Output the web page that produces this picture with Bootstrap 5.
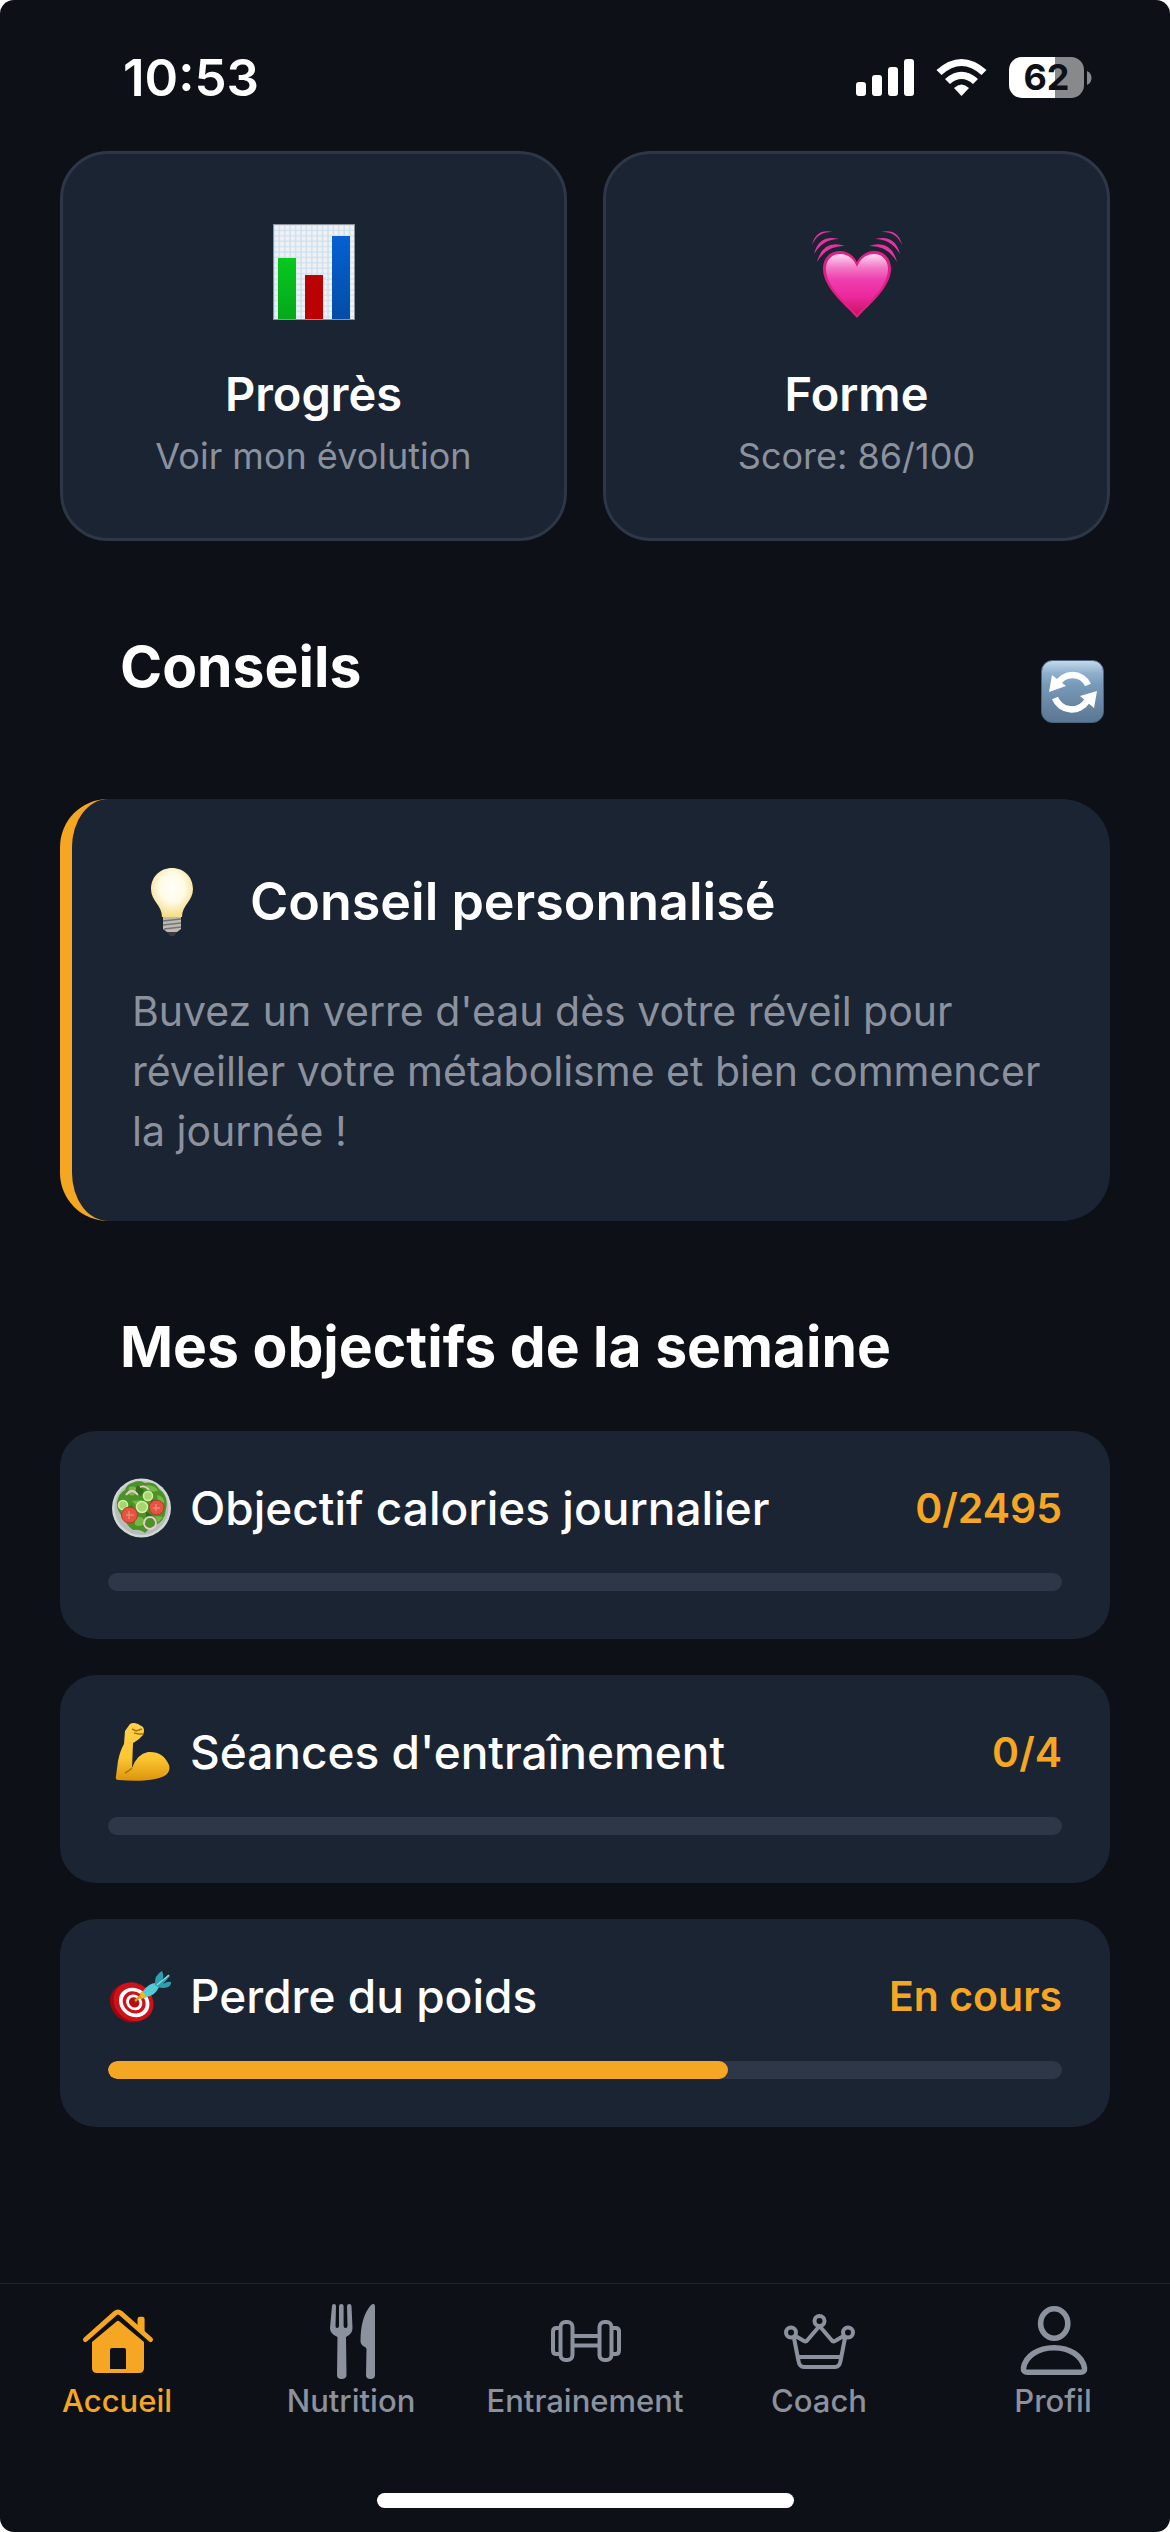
<!DOCTYPE html>
<html lang="fr">
<head>
<meta charset="utf-8">
<meta name="viewport" content="width=device-width, initial-scale=1">
<title>Accueil</title>
<link rel="stylesheet" href="https://cdn.jsdelivr.net/npm/bootstrap@5.3.0/dist/css/bootstrap.min.css">
<style>
  :root { --ink: #0d1017; --panel: #1b2432; --line: #2d3748; --accent: #f5a623; --muted: #8b929e; }
  body { background: #fff; color: #fff; font-family: Inter, "Noto Sans", sans-serif; }
  svg { display: block; flex: none; }
  .app { background: var(--ink); border-radius: 14px; }
  .statusbar { height: 151px; padding: 4px 78px 0 123px; }
  .status-icons { gap: 22px; }
  .clock { font-size: 51px; line-height: 60px; font-weight: 600; }
  .battery { width: 75px; height: 41px; border-radius: 13px; color: var(--ink); font-size: 36px; line-height: 41px; font-weight: 700;
    background: linear-gradient(90deg, #fff 62%, #88898d 62%); }
  .page { padding: 0 60px; }
  .tile { background: var(--panel); border: 3px solid var(--line); border-radius: 48px; padding: 60px 24px; color: #fff; }
  .tile-art { height: 116px; margin-bottom: 36px; }
  .tile-title { font-size: 47px; line-height: 56px; font-weight: 600; margin-bottom: 12px; }
  .tile-sub { font-size: 36px; line-height: 44px; color: var(--muted); }
  .tiles { gap: 36px; }
  .section-head { margin-top: 90px; padding: 0 6px 0 60px; }
  .section-head h2 { font-size: 57px; line-height: 72px; font-weight: 700; margin-bottom: 48px; }
  .tip { background: var(--panel); border-left: 12px solid var(--accent); border-radius: 48px; padding: 60px; margin-top: 48px; }
  .tip-head { height: 86px; gap: 38px; margin-bottom: 36px; }
  .tip-head h3 { font-size: 52px; line-height: 64px; font-weight: 600; }
  .tip p { font-size: 41px; line-height: 60px; color: var(--muted); }
  .goals { gap: 36px; }
  .goal { background: var(--panel); border-radius: 36px; padding: 48px; }
  .goal-head { height: 58px; margin-bottom: 36px; }
  .goal-name { gap: 16px; font-size: 46px; line-height: 58px; font-weight: 500; }
  .goal-value { color: var(--accent); font-size: 41px; line-height: 58px; font-weight: 600; }
  .goal .progress { --bs-progress-height: 18px; --bs-progress-bg: var(--line); --bs-progress-border-radius: 9px; --bs-progress-bar-bg: var(--accent); }
  .goal .progress-bar { border-radius: 9px; }
  .tabbar { border-top: 1px solid #20252e; padding-top: 15px; }
  .tab { flex: 1 1 0; color: var(--muted); font-size: 31px; line-height: 36px; font-weight: 500; }
  .tab.active { color: var(--accent); }
  .home-bar { width: 417px; height: 15px; border-radius: 8px; background: #fff; margin: 74px auto 24px; }
</style>
<script src="https://cdn.jsdelivr.net/npm/bootstrap@5.3.0/dist/js/bootstrap.bundle.min.js"></script>
</head>
<body>
<div class="app d-flex flex-column min-vh-100">
  <header class="statusbar d-flex align-items-center justify-content-between">
    <div class="clock">10:53</div>
    <div class="status-icons d-flex align-items-center">
      <svg width="58" height="38" viewBox="0 0 58 38" fill="#fff" role="img" aria-label="Réseau"><rect y="23" width="10" height="14" rx="3"/><rect x="16" y="16" width="10" height="21" rx="3"/><rect x="32" y="8" width="10" height="29" rx="3"/><rect x="48" width="10" height="37" rx="3"/></svg>
      <svg width="51" height="38" viewBox="0 0 50 38" fill="#fff" role="img" aria-label="Wi-Fi"><path d="M0 11Q25-11 50 11L45 16Q25-2 5 16Z"/><path d="M8.500 20Q25 5.500 41.500 20L36.500 25Q25 15 13.500 25Z"/><path d="M17.500 29Q25 22 32.500 29L25 37Z"/></svg>
      <div class="d-flex align-items-center">
        <div class="battery text-center">62</div>
        <svg width="8" height="14" viewBox="0 0 8 14" fill="#88898d"><path d="M3 0Q7.500 2 7.500 7Q7.500 12 3 14Z"/></svg>
      </div>
    </div>
  </header>

  <main class="page flex-grow-1">
    <div class="tiles d-flex">
      <a href="#progres" class="tile flex-fill w-50 text-center text-decoration-none">
        <div class="tile-art d-flex align-items-center justify-content-center">
          <svg width="82" height="96" viewBox="0 0 82 96">
            <defs>
              <pattern id="grid" width="5.400" height="5.400" patternUnits="userSpaceOnUse"><rect width="5.400" height="5.400" fill="#f3f1f0"/><path d="M0 1H5.400M1 0V5.400" stroke="#c6e0f4" stroke-width="1.300"/></pattern>
              <linearGradient id="gg" x2="0" y2="1"><stop stop-color="#06c91e"/><stop offset="1" stop-color="#05a81a"/></linearGradient>
              <linearGradient id="gb" x2="0" y2="1"><stop stop-color="#0560d2"/><stop offset="1" stop-color="#044da6"/></linearGradient>
            </defs>
            <rect width="82" height="96" fill="url(#grid)"/><rect x=".5" y=".5" width="81" height="95" fill="none" stroke="#8d949c"/>
            <rect x="5" y="34" width="18" height="61" fill="url(#gg)"/><rect x="32" y="51" width="18" height="44" fill="#bb0202"/><rect x="59" y="12" width="18" height="83" fill="url(#gb)"/>
          </svg>
        </div>
        <div class="tile-title">Progrès</div>
        <div class="tile-sub">Voir mon évolution</div>
      </a>
      <a href="#forme" class="tile flex-fill w-50 text-center text-decoration-none">
        <div class="tile-art d-flex align-items-center justify-content-center">
          <svg width="90" height="92" viewBox="0 -5 90 92">
            <defs>
              <linearGradient id="hg" x2="0" y2="1"><stop stop-color="#ffd9f4"/><stop offset=".22" stop-color="#f279c6"/><stop offset=".42" stop-color="#ee3fae"/><stop offset=".7" stop-color="#ec289d"/><stop offset="1" stop-color="#c9145f"/></linearGradient>
            </defs>
            <path d="M45 87C38 78 11 58 11 38C11 27 18 20 28 20C36 20 42 25 45 31C48 25 54 20 62 20C72 20 79 27 79 38C79 58 52 78 45 87Z" fill="#df1f85"/>
            <path d="M45 84C38 75 14 57 14 38C14 29 20 23 28 23C36 23 42 28 45 36C48 28 54 23 62 23C70 23 76 29 76 38C76 57 52 75 45 84Z" fill="url(#hg)"/>
            <g id="waves" fill="#ee2fa3"><path d="M0 14Q4-3 21 1Q6 0 0 14Z"/><path d="M2 23Q7 3 27 8Q11 8 2 23Z"/><path d="M5 31Q11 8 33 15Q15 14 5 31Z"/></g>
            <use href="#waves" transform="translate(90 0) scale(-1 1)"/>
          </svg>
        </div>
        <div class="tile-title">Forme</div>
        <div class="tile-sub">Score: 86/100</div>
      </a>
    </div>

    <div class="section-head d-flex align-items-center justify-content-between">
      <h2>Conseils</h2>
      <button type="button" class="btn p-0 border-0" aria-label="Actualiser">
        <svg width="63" height="63" viewBox="0 0 63 63">
          <defs><linearGradient id="rg" x2="0" y2="1"><stop stop-color="#c7dcec"/><stop offset=".2" stop-color="#8fb0cd"/><stop offset=".4" stop-color="#7799b9"/><stop offset="1" stop-color="#5a7691"/></linearGradient></defs>
          <rect x=".5" y=".5" width="62" height="62" rx="11" fill="url(#rg)" stroke="#49647c"/>
          <path d="M16 25A17 17 0 0 1 47 25" fill="none" stroke="#fff" stroke-width="6.500"/><path d="M11 15L8 32L25 26Z" fill="#fff"/>
          <path d="M14 38A18 18 0 0 0 46 41" fill="none" stroke="#fff" stroke-width="6.500"/><path d="M56 31L39 36L53 48Z" fill="#fff"/>
        </svg>
      </button>
    </div>

    <section class="tip">
      <div class="tip-head d-flex align-items-center">
        <svg width="80" height="70" viewBox="0 0 80 70">
          <defs><radialGradient id="bg" cx=".5" cy=".4" r=".6"><stop stop-color="#fffffa"/><stop offset=".5" stop-color="#fffbe6"/><stop offset="1" stop-color="#f5dc86"/></radialGradient></defs>
          <path d="M40 1C28 1 19 10 19 22C19 34 30 38 30 50H50C50 38 61 34 61 22C61 10 52 1 40 1Z" fill="url(#bg)"/>
          <path d="M31 50H49V62L45 65H35L31 62Z" fill="#bdb9b3"/><path d="M31 54L49 52M31 58L49 56M32 62L49 60" stroke="#77736e" stroke-width="1.500"/><path d="M35 65H45L42 69H38Z" fill="#3c3b3b"/>
        </svg>
        <h3 class="mb-0">Conseil personnalisé</h3>
      </div>
      <p class="mb-0">Buvez un verre d'eau dès votre réveil pour réveiller votre métabolisme et bien commencer la journée !</p>
    </section>

    <div class="section-head"><h2>Mes objectifs de la semaine</h2></div>

    <div class="goals d-flex flex-column">
      <section class="goal">
        <div class="goal-head d-flex align-items-center justify-content-between">
          <div class="goal-name d-flex align-items-center">
            <svg width="66" height="60" viewBox="0 0 66 60">
              <circle cx="33.500" cy="30" r="29.500" fill="#d3d6d6"/><circle cx="33.500" cy="30" r="27" fill="#b7bdb8"/>
              <path d="M24 5Q31 1 37 5Q47 3 51 11Q61 18 58 31Q57 44 46 48Q39 52 37 55Q32 51 25 52Q18 47 16 40Q8 33 9 24Q11 15 17 12Q19 6 24 5Z" fill="#4c9327"/>
              <path d="M21 9Q28 7 31 13Q25 20 20 16ZM38 7Q48 7 50 13L42 14ZM49 17Q57 19 56 25L50 24ZM13 32Q20 32 20 36L14 37ZM27 39Q35 38 38 44Q34 50 27 47ZM47 38L55 39L50 45ZM24 23L34 22L30 29Z" fill="#74b944"/>
              <path d="M29 7L36 12L33 18L27 15ZM42 21L48 23L45 28ZM23 26L28 36L22 34ZM38 33L45 38L38 41Z" fill="#2f6f17"/>
              <g fill="#a6d672" stroke="#d3f0a4" stroke-width="1.500"><circle cx="15" cy="27" r="4.500"/><circle cx="34" cy="29" r="5.500"/><circle cx="40" cy="18" r="4.500"/></g>
              <g fill="#e35442" stroke="#bd3426"><circle cx="21.500" cy="37" r="8"/><circle cx="48.500" cy="29.500" r="7.500"/></g>
              <path d="M21 33V41M18 37H26M48 26V33M45 30H52" stroke="#f0876c" stroke-width="1.500"/>
              <g fill="none" stroke="#ecc9d2" stroke-width="1.800"><path d="M18 17Q24 9 30 17"/><path d="M32 9Q37 7 41 12"/><circle cx="42" cy="45" r="6"/></g>
            </svg>
            <span>Objectif calories journalier</span>
          </div>
          <div class="goal-value">0/2495</div>
        </div>
        <div class="progress" role="progressbar" aria-label="Calories" aria-valuenow="0" aria-valuemin="0" aria-valuemax="2495"><div class="progress-bar" style="width:0%"></div></div>
      </section>

      <section class="goal">
        <div class="goal-head d-flex align-items-center justify-content-between">
          <div class="goal-name d-flex align-items-center">
            <svg width="66" height="60" viewBox="0 0 66 60">
              <defs><linearGradient id="ag" x2="0" y2="1"><stop stop-color="#ffd24a"/><stop offset=".6" stop-color="#fdc633"/><stop offset="1" stop-color="#dc940c"/></linearGradient></defs>
              <path d="M17 9L22 2Q25 0 30 2L35 5Q37 8 35 13L31 17Q27 20 25 21L24 46Q29 32 40 30Q55 29 61 43Q64 54 47 57Q34 60 10 58Q7 58 8 54L10 39Q12 29 16 22Z" fill="url(#ag)"/>
              <path d="M24 46Q21 49 17 51M24 7L28 9L34 7M26 11L31 12L35 12" fill="none" stroke="#b06f08" stroke-width="1.400"/>
            </svg>
            <span>Séances d'entraînement</span>
          </div>
          <div class="goal-value">0/4</div>
        </div>
        <div class="progress" role="progressbar" aria-label="Séances" aria-valuenow="0" aria-valuemin="0" aria-valuemax="4"><div class="progress-bar" style="width:0%"></div></div>
      </section>

      <section class="goal">
        <div class="goal-head d-flex align-items-center justify-content-between">
          <div class="goal-name d-flex align-items-center">
            <svg width="66" height="60" viewBox="0 0 66 60">
              <g transform="rotate(38 24 36)"><ellipse cx="23" cy="38" rx="21" ry="18.500" fill="#96090e"/><ellipse cx="25" cy="35" rx="21" ry="18.500" fill="#cf1219"/><ellipse cx="26" cy="35" rx="16" ry="14" fill="#fff"/><ellipse cx="26" cy="35" rx="12" ry="10.500" fill="#cf1219"/><ellipse cx="26" cy="35" rx="8.500" ry="7.500" fill="#fff"/><ellipse cx="26" cy="35" rx="5.500" ry="4.800" fill="#b50f16"/></g>
              <path d="M27 35L36 27" stroke="#d59c15" stroke-width="2.500"/><path d="M32 27L35 25L40 31L33 33Z" fill="#e9b91f"/>
              <path d="M35 25Q42 16 49 17L51 21Q47 30 38 31Z" fill="#55cbd8"/><path d="M47 19Q46 9 54 5Q57 11 53 17L60 9L62 10L55 18Q60 15 63 16Q64 21 56 22Q52 22 50 21Z" fill="#2e9fae"/><path d="M49 19L61 9" stroke="#81dce2" stroke-width="1.500"/>
            </svg>
            <span>Perdre du poids</span>
          </div>
          <div class="goal-value">En cours</div>
        </div>
        <div class="progress" role="progressbar" aria-label="Poids" aria-valuenow="65" aria-valuemin="0" aria-valuemax="100"><div class="progress-bar" style="width:65%"></div></div>
      </section>
    </div>
  </main>

  <footer>
    <nav class="tabbar d-flex" aria-label="Navigation principale">
      <a href="#accueil" class="tab active d-flex flex-column align-items-center text-decoration-none" aria-current="page">
        <svg width="84" height="84" viewBox="0 0 84 84" fill="currentColor">
          <path d="M10.500 40.500L40.500 14Q43 12 45.500 14L75.500 40.500" fill="none" stroke="currentColor" stroke-width="5" stroke-linecap="round"/><path d="M62.500 30V20Q62.500 17.700 65 17.700H67.500Q69.600 17.700 69.600 20V36Z"/>
          <path fill-rule="evenodd" d="M41.500 22.500Q43 21 44.500 22.500L69 43V69Q69 74 64 74H22Q17 74 17 69V43ZM37 49Q35 49 35 51V70H51V51Q51 49 49 49Z"/>
        </svg>Accueil</a>
      <a href="#nutrition" class="tab d-flex flex-column align-items-center text-decoration-none">
        <svg width="84" height="84" viewBox="0 0 84 84" fill="currentColor">
          <path d="M23 7Q23 5 25 5Q27 5 27 7L26.500 27Q26.500 29 28 29Q30 29 30 27V7Q30 5 32.300 5Q34.600 5 34.600 7V27Q34.600 29 36.500 29Q38.500 29 38.500 27L38 7Q38 5 40.300 5Q42.500 5 42.500 7L43.500 29Q43.500 35 37 38L37.500 76Q37.500 80 32.500 80Q28 80 28 76L28.500 38Q21 35 21 29Z"/>
          <path d="M66 8V76Q66 80 61.500 80Q57 80 57 76L57.500 50Q57.500 49 56 48Q51.500 46 51.500 42Q51.500 18 62 6Q66 3 66 8Z"/>
        </svg>Nutrition</a>
      <a href="#entrainement" class="tab d-flex flex-column align-items-center text-decoration-none">
        <svg width="84" height="84" viewBox="0 0 84 84" fill="none" stroke="currentColor" stroke-width="4">
          <rect x="17.500" y="23" width="12" height="38" rx="5"/><rect x="56.500" y="23" width="12" height="38" rx="5"/><path d="M29.500 37H56.500M29.500 46.500H56.500M17.500 29H13.500Q10 29 10 32.500V51.500Q10 55 13.500 55H17.500M68.500 29H72.500Q76 29 76 32.500V51.500Q76 55 72.500 55H68.500"/>
        </svg>Entrainement</a>
      <a href="#coach" class="tab d-flex flex-column align-items-center text-decoration-none">
        <svg width="84" height="84" viewBox="0 0 84 84" fill="none" stroke="currentColor" stroke-width="4" stroke-linejoin="round">
          <circle cx="14" cy="33.500" r="5"/><circle cx="42.500" cy="22" r="5"/><circle cx="71" cy="33.500" r="5"/>
          <path d="M17 39L21.500 62Q22.500 68 27 68H58Q62.500 68 63.500 62L68 39M18.500 37L27 42Q29 43 30.500 41L42.500 27L54.500 41Q56 43 58 42L66.500 37M21 58H64"/>
        </svg>Coach</a>
      <a href="#profil" class="tab d-flex flex-column align-items-center text-decoration-none">
        <svg width="84" height="84" viewBox="0 0 84 84" fill="none" stroke="currentColor" stroke-width="5.600">
          <ellipse cx="43.200" cy="24.500" rx="13.600" ry="14.700"/><path d="M16.500 73.200H69.500Q74 73.200 73.500 69C71.500 57 59 48.800 43 48.800C27 48.800 14.500 57 12.500 69Q12 73.200 16.500 73.200Z"/>
        </svg>Profil</a>
    </nav>
    <div class="home-bar"></div>
  </footer>
</div>
</body>
</html>
